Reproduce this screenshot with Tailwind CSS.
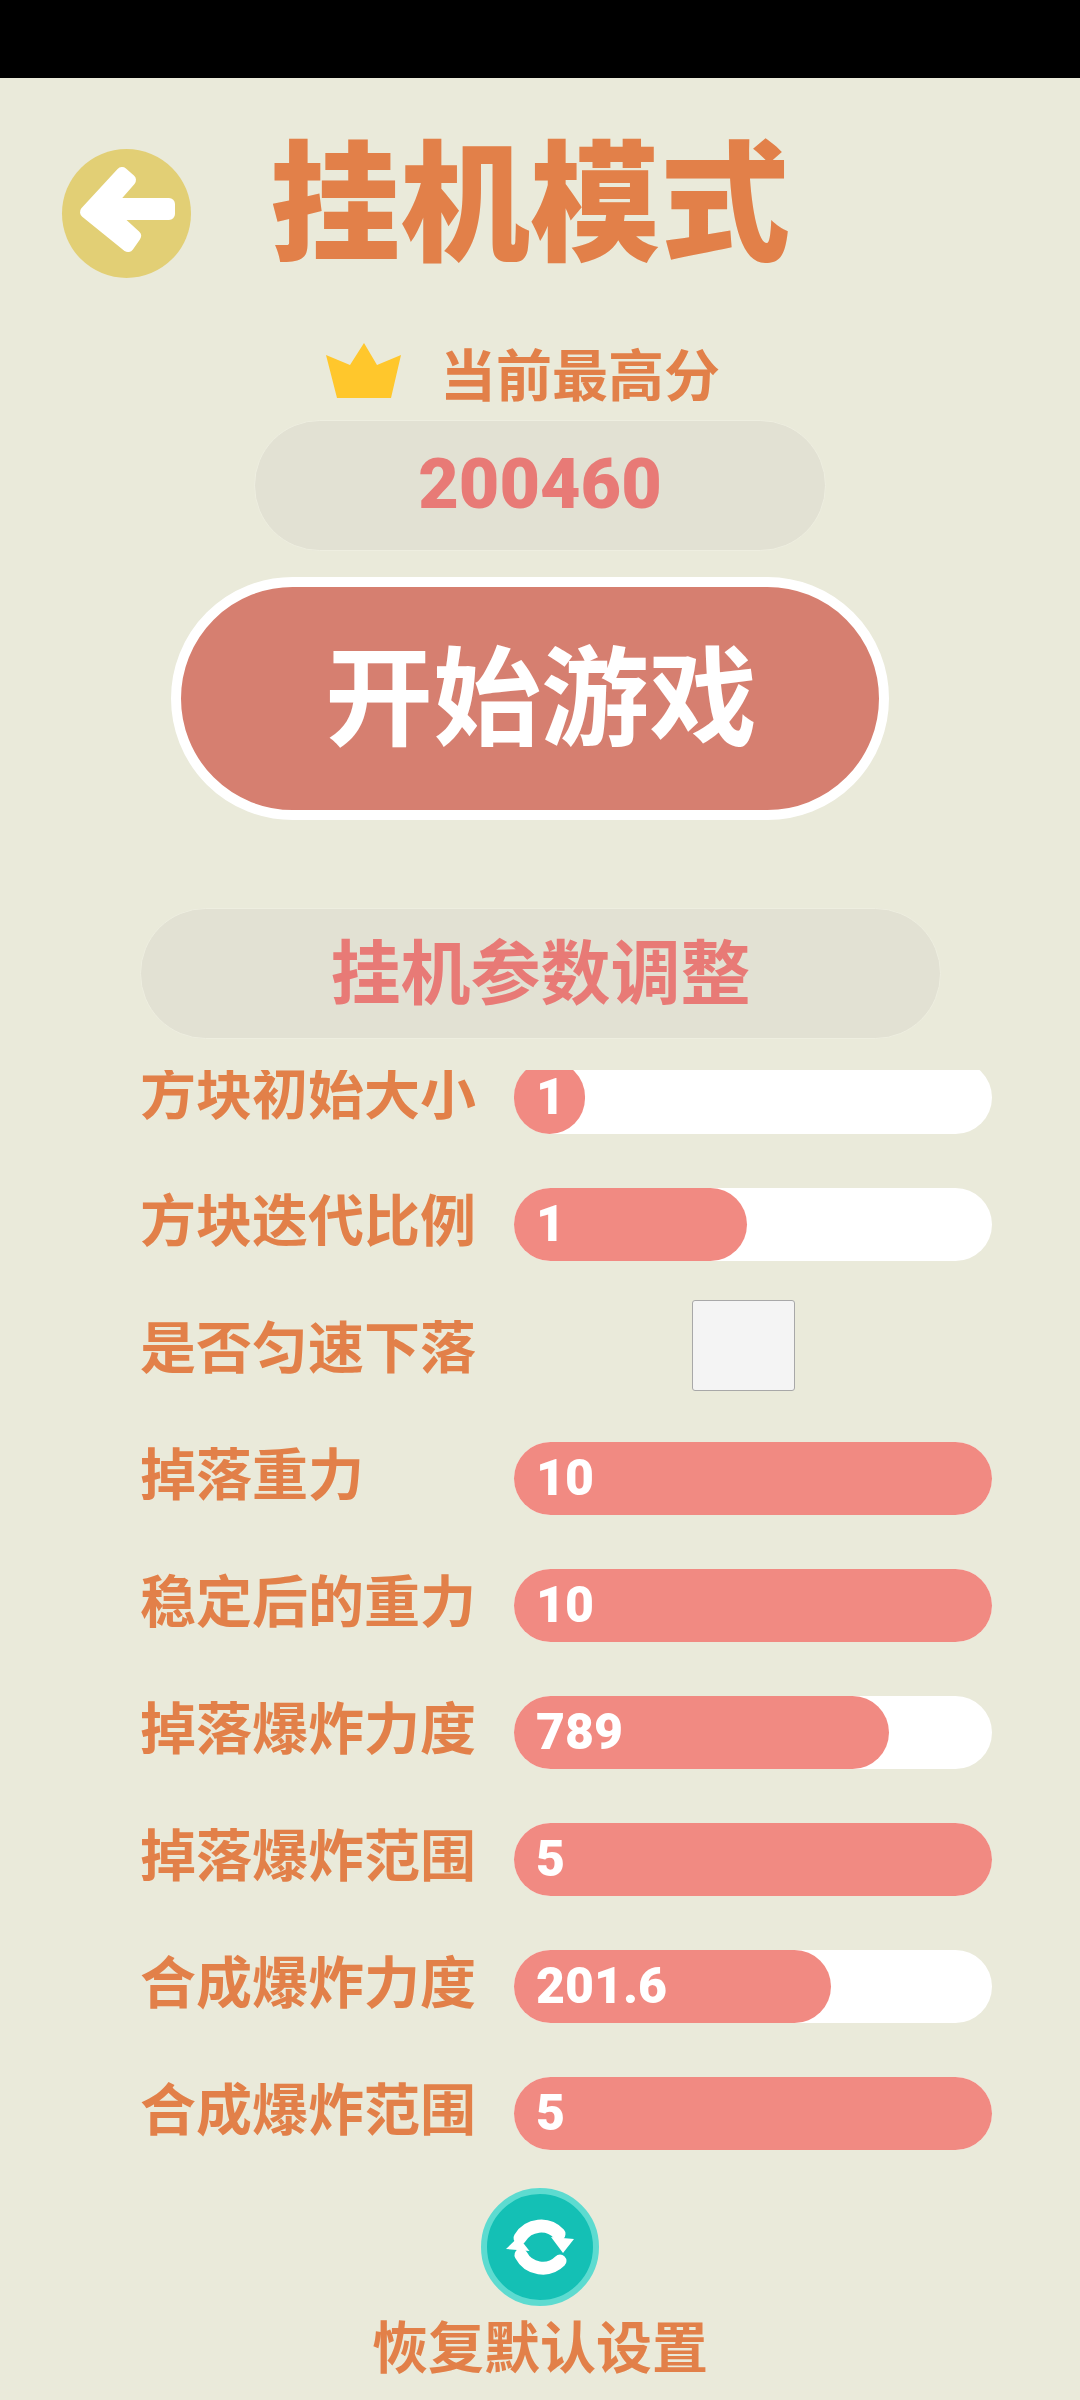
<!DOCTYPE html>
<html lang="zh-CN">
<head>
  <meta charset="UTF-8">
  <meta name="viewport" content="width=device-width, initial-scale=1.0">
  <title>挂机模式</title>
  <script src="https://cdn.jsdelivr.net/npm/@tailwindcss/browser@4"></script>
</head>
<body class="bg-[#eaeada] font-['Lato','Noto_Sans_CJK_SC',sans-serif] font-bold text-[#e28049]">
  <div class="w-[1080px] h-[2400px] overflow-hidden">
    <!-- status bar -->
    <div class="h-[78px] bg-black"></div>

    <!-- header -->
    <div class="flex pt-[71px] pl-[62px] h-[200px]">
      <div class="w-[129px] h-[129px] rounded-full bg-[#e2cf75] shrink-0">
        <svg viewBox="0 0 129 129" class="w-full h-full">
          <polygon points="60,24 68,31 47,55 107,55 107,65 49,65 73,87 66,97 24,63" fill="#fff" stroke="#fff" stroke-width="12" stroke-linejoin="round"/>
        </svg>
      </div>
      <h1 class="ml-[79px] -mt-[14px] h-[130px] text-[130px] leading-[130px] font-black">挂机模式</h1>
    </div>

    <!-- best score -->
    <div class="flex pl-[326px] mt-[65px] h-[57px]">
      <svg viewBox="0 0 76 56" class="w-[76px] h-[56px] shrink-0">
        <polygon points="38,0 51,22 75,12 65,55 11,55 0,12 24,22" fill="#ffc72c"/>
      </svg>
      <span class="ml-[38px] text-[56px] leading-[66px] -mt-[1px]">当前最高分</span>
    </div>
    <div class="ml-[254px] mt-[20px] w-[572px] h-[131px] rounded-full bg-[#e2e1d3] border border-[#eeeee0] flex items-center justify-center pb-[4px] text-[#e87a76] font-['Roboto',sans-serif] text-[70px] leading-none font-black">200460</div>

    <!-- start -->
    <div class="ml-[171px] mt-[26px] w-[718px] h-[243px] rounded-full bg-[#d67f70] border-[10px] border-white flex items-center justify-center pl-[22px] pb-[8px] text-white text-[108px] leading-none">开始游戏</div>

    <!-- section title -->
    <div class="ml-[140px] mt-[88px] w-[801px] h-[131px] rounded-full bg-[#e2e1d3] border border-[#eeeee0] flex items-center justify-center pb-[3px] text-[#e87a76] text-[70px] leading-none">挂机参数调整</div>

    <!-- params -->
    <div class="mt-[31px] h-[1107px] overflow-hidden">
      <div class="-mt-[36px] pl-[140px]">
        <div class="flex items-center h-[127px]">
          <span class="w-[374px] text-[56px] leading-[66px] -mt-[10px]">方块初始大小</span>
          <div class="w-[478px] h-[73px] rounded-full bg-white"><div class="w-[71px] h-full rounded-full bg-[#f18a82] pl-[22px] text-white font-['Roboto',sans-serif] text-[50px] leading-[73px] font-black">1</div></div>
        </div>
        <div class="flex items-center h-[127px]">
          <span class="w-[374px] text-[56px] leading-[66px] -mt-[10px]">方块迭代比例</span>
          <div class="w-[478px] h-[73px] rounded-full bg-white"><div class="w-[233px] h-full rounded-full bg-[#f18a82] pl-[22px] text-white font-['Roboto',sans-serif] text-[50px] leading-[73px] font-black">1</div></div>
        </div>
        <div class="flex items-center h-[127px]">
          <span class="w-[374px] text-[56px] leading-[66px] -mt-[10px]">是否匀速下落</span>
          <div class="ml-[178px] -mt-[12px] w-[103px] h-[91px] rounded-[3px] bg-[#f4f4f4] border border-[#a8a8a8]"></div>
        </div>
        <div class="flex items-center h-[127px]">
          <span class="w-[374px] text-[56px] leading-[66px] -mt-[10px]">掉落重力</span>
          <div class="w-[478px] h-[73px] rounded-full bg-white"><div class="w-full h-full rounded-full bg-[#f18a82] pl-[22px] text-white font-['Roboto',sans-serif] text-[50px] leading-[73px] font-black">10</div></div>
        </div>
        <div class="flex items-center h-[127px]">
          <span class="w-[374px] text-[56px] leading-[66px] -mt-[10px]">稳定后的重力</span>
          <div class="w-[478px] h-[73px] rounded-full bg-white"><div class="w-full h-full rounded-full bg-[#f18a82] pl-[22px] text-white font-['Roboto',sans-serif] text-[50px] leading-[73px] font-black">10</div></div>
        </div>
        <div class="flex items-center h-[127px]">
          <span class="w-[374px] text-[56px] leading-[66px] -mt-[10px]">掉落爆炸力度</span>
          <div class="w-[478px] h-[73px] rounded-full bg-white"><div class="w-[375px] h-full rounded-full bg-[#f18a82] pl-[22px] text-white font-['Roboto',sans-serif] text-[50px] leading-[73px] font-black">789</div></div>
        </div>
        <div class="flex items-center h-[127px]">
          <span class="w-[374px] text-[56px] leading-[66px] -mt-[10px]">掉落爆炸范围</span>
          <div class="w-[478px] h-[73px] rounded-full bg-white"><div class="w-full h-full rounded-full bg-[#f18a82] pl-[22px] text-white font-['Roboto',sans-serif] text-[50px] leading-[73px] font-black">5</div></div>
        </div>
        <div class="flex items-center h-[127px]">
          <span class="w-[374px] text-[56px] leading-[66px] -mt-[10px]">合成爆炸力度</span>
          <div class="w-[478px] h-[73px] rounded-full bg-white"><div class="w-[317px] h-full rounded-full bg-[#f18a82] pl-[22px] text-white font-['Roboto',sans-serif] text-[50px] leading-[73px] font-black">201.6</div></div>
        </div>
        <div class="flex items-center h-[127px]">
          <span class="w-[374px] text-[56px] leading-[66px] -mt-[10px]">合成爆炸范围</span>
          <div class="w-[478px] h-[73px] rounded-full bg-white"><div class="w-full h-full rounded-full bg-[#f18a82] pl-[22px] text-white font-['Roboto',sans-serif] text-[50px] leading-[73px] font-black">5</div></div>
        </div>
      </div>
    </div>

    <!-- reset -->
    <div class="mt-[11px] flex flex-col items-center">
      <div class="w-[118px] h-[118px] rounded-full bg-[#14c0b5] border-[6px] border-[#5ddbd0]">
        <svg viewBox="-53 -53 106 106" class="w-full h-full">
          <path d="M-20 -9 A24.5 24.5 0 0 1 19 -13" fill="none" stroke="#fff" stroke-width="13" stroke-linecap="round"/>
          <polygon points="11,-10 34,-8 23,6" fill="#fff"/>
          <path d="M20 14 A24.5 24.5 0 0 1 -19 8" fill="none" stroke="#fff" stroke-width="13" stroke-linecap="round"/>
          <polygon points="-34,2 -21.5,-10 -10.5,4" fill="#fff"/>
        </svg>
      </div>
      <span class="mt-[8px] text-[56px] leading-[66px]">恢复默认设置</span>
    </div>
  </div>
</body>
</html>
